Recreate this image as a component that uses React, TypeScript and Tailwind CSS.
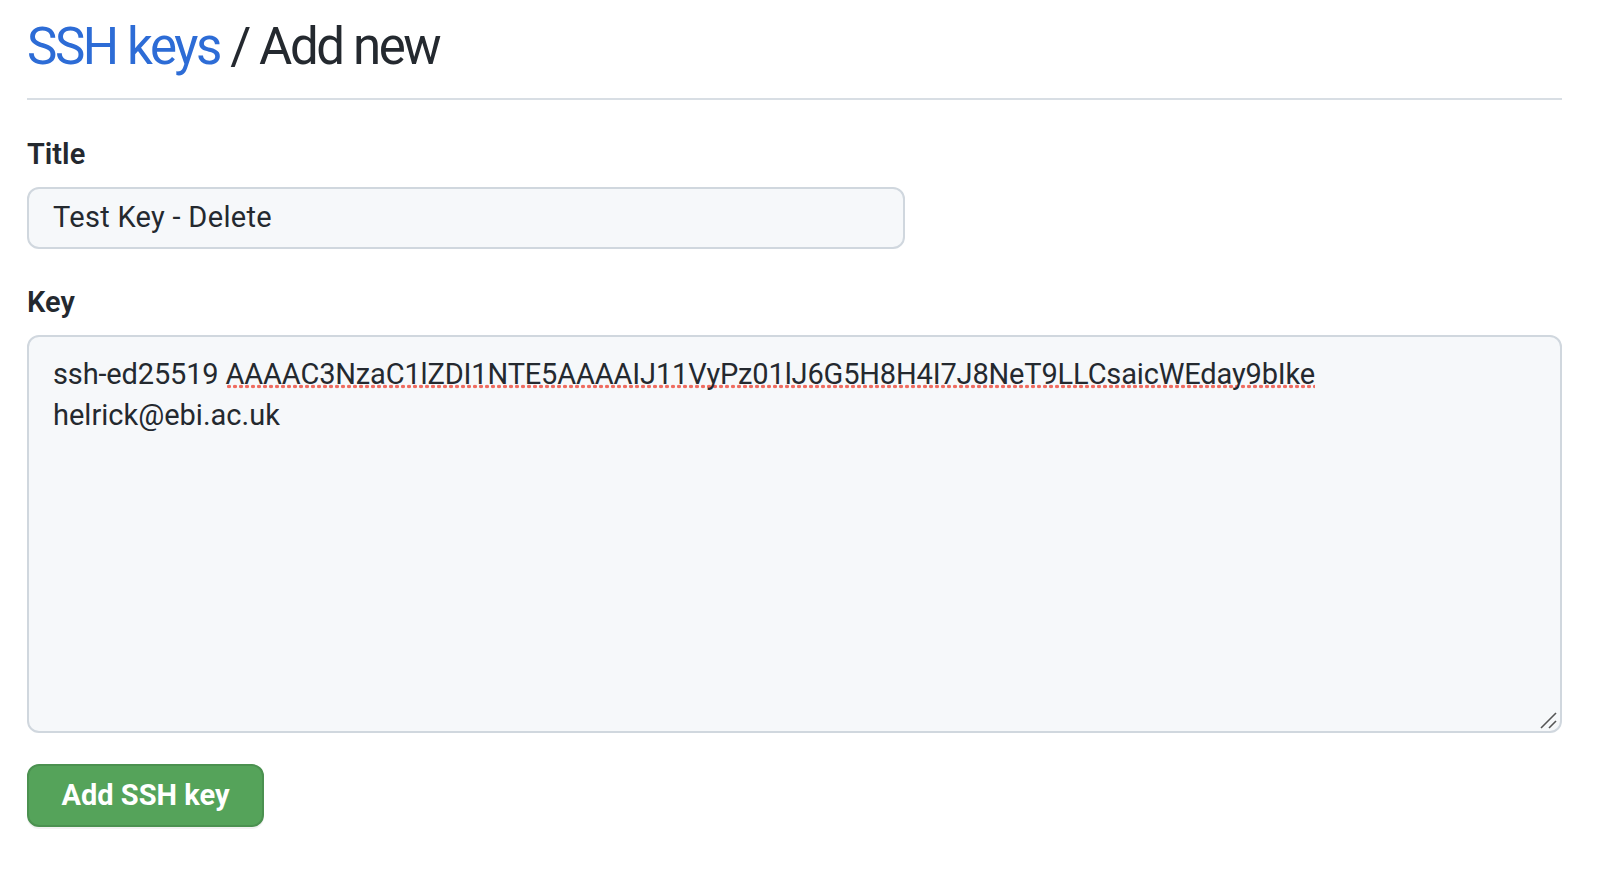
import React from "react";

export default function App() {
  return (
    <div
      className="min-h-[874px] w-full bg-white pl-[27px] pr-[56px] text-[#24292f]"
      style={{ fontFamily: 'Roboto, "Liberation Sans", Arial, sans-serif' }}
    >
      <div className="border-b-2 border-[#d8dee4] pt-[17px] pb-[21px]">
        <h1 className="text-[51px] leading-[60px] font-normal tracking-[-2.4px]">
          <a className="text-[#2d6cd6]">SSH keys</a>
          <span> / Add new</span>
        </h1>
      </div>

      <form className="flex flex-col" onSubmit={(e) => e.preventDefault()}>
        <label className="mt-[36px] text-[29px] leading-[36px] font-semibold">Title</label>
        <div className="mt-[15px] flex h-[62px] w-[878px] items-center rounded-[12px] border-2 border-[#d0d7de] bg-[#f6f8fa] pl-[24px] text-[29px] tracking-[0.3px]">
          Test Key - Delete
        </div>

        <label className="mt-[35px] text-[29px] leading-[36px] font-semibold">Key</label>
        <div className="relative mt-[15px] h-[398px] w-full rounded-[12px] border-2 border-[#d0d7de] bg-[#f6f8fa] pl-[24px] pt-[17px] text-[29px] leading-[41px]">
          <div className="tracking-[-0.15px]">
            ssh-ed25519{" "}
            <span className="bg-[radial-gradient(circle,#ef6c60_1.7px,transparent_2.1px)] bg-[length:6px_9px] bg-[position:0_100%] bg-repeat-x">
              AAAAC3NzaC1lZDI1NTE5AAAAIJ11VyPz01lJ6G5H8H4I7J8NeT9LLCsaicWEday9bIke
            </span>
          </div>
          <div>helrick@ebi.ac.uk</div>
          <svg
            className="absolute right-[2px] bottom-[1px]"
            width="18"
            height="18"
            viewBox="0 0 18 18"
          >
            <line x1="1" y1="16" x2="16" y2="1" stroke="#555" strokeWidth="1.6" />
            <line x1="9" y1="16" x2="16" y2="9" stroke="#555" strokeWidth="1.6" />
          </svg>
        </div>

        <div className="mt-[31px]">
          <button
            type="submit"
            className="h-[63px] w-[237px] rounded-[12px] border-2 border-[#4b9150] bg-[#55a35a] text-[29px] font-bold text-white shadow-[0_2px_0_rgba(27,31,36,0.06)]"
          >
            Add SSH key
          </button>
        </div>
      </form>
    </div>
  );
}
